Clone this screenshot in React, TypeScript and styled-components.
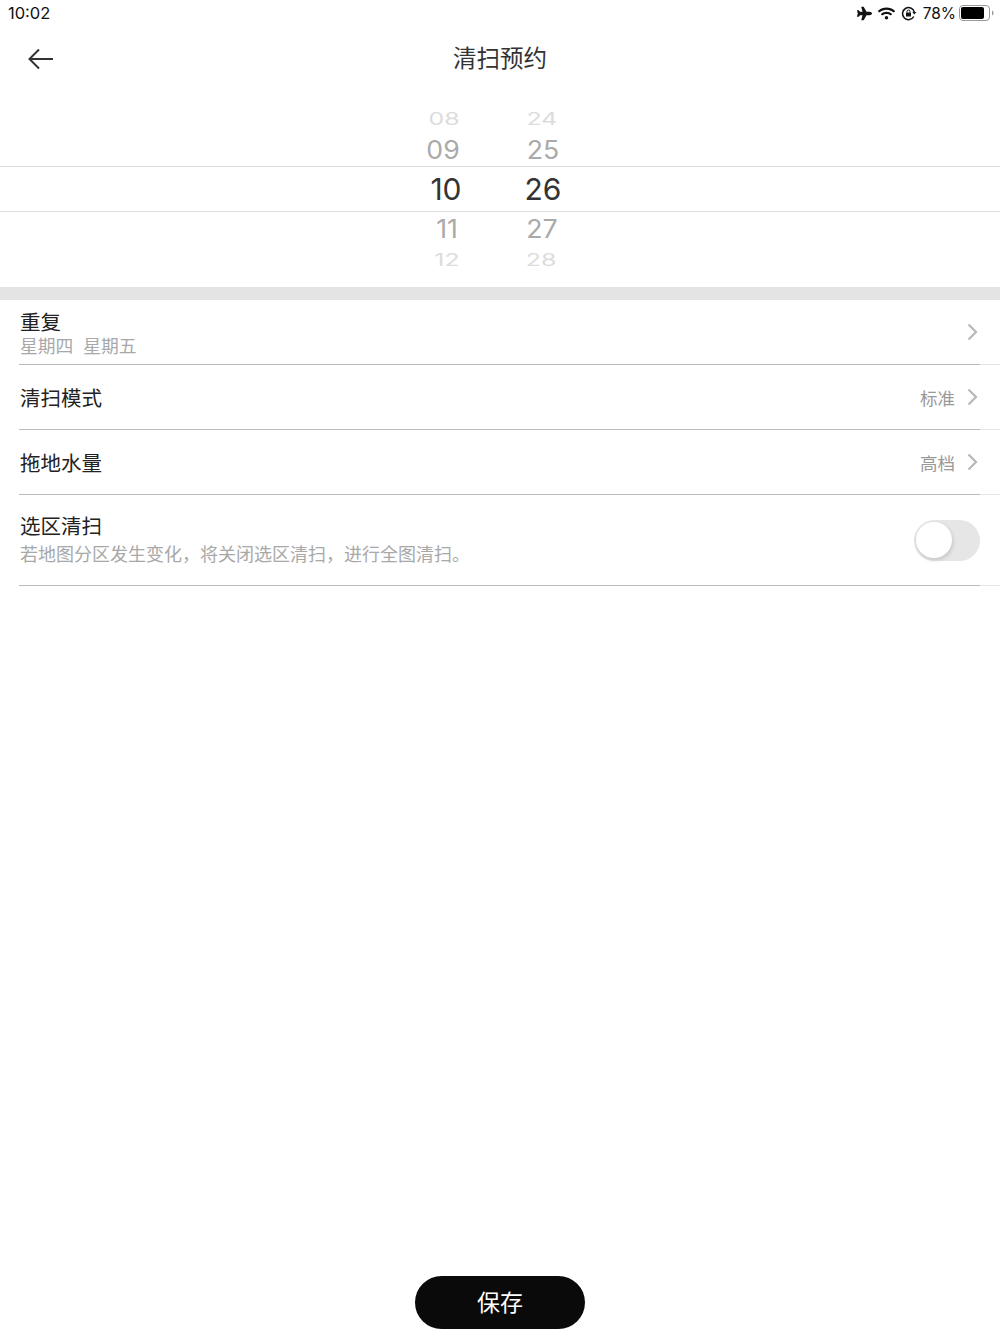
import styled, { createGlobalStyle } from 'styled-components';
import { FaPlane, FaWifi } from 'react-icons/fa';

const GlobalStyle = createGlobalStyle`
  * {
    box-sizing: border-box;
  }

  html,
  body {
    margin: 0;
    padding: 0;
    background: #fff;
    font-family: 'Noto Sans CJK SC', 'Noto Sans', sans-serif;
  }
`;

const Page = styled.div`
  display: flex;
  flex-direction: column;
  min-height: 1334px;
  background: #fff;
`;

const StatusBar = styled.div`
  display: flex;
  align-items: center;
  justify-content: space-between;
  height: 26px;
  padding: 0 6px 0 8px;
  font-family: Inter, 'Liberation Sans', sans-serif;
  color: #111;
`;

const Clock = styled.span`
  font-size: 16.5px;
`;

const StatusIcons = styled.div`
  display: flex;
  align-items: center;
  gap: 6px;
  font-size: 15.5px;
`;

const BatteryLevel = styled.span`
  margin-right: -3px;
`;

const NavBar = styled.div`
  position: relative;
  display: flex;
  align-items: center;
  justify-content: center;
  height: 64px;
  padding-bottom: 2px;
`;

const BackButton = styled.div`
  position: absolute;
  left: 28px;
  top: 22px;
  display: flex;
`;

const Title = styled.div`
  font-size: 23.5px;
  color: #333;
`;

const Picker = styled.div`
  display: flex;
  flex-direction: column;
  height: 197px;
  padding-top: 14px;
`;

const PickerRow = styled.div<{ $h: number; $selected?: boolean }>`
  display: flex;
  justify-content: center;
  align-items: center;
  flex: none;
  height: ${(p) => p.$h}px;
  padding-right: 12px;
  ${(p) => p.$selected && 'border-top: 1px solid #ddd; border-bottom: 1px solid #ddd;'}
`;

const PickerCell = styled.div<{ $level: 0 | 1 | 2; $shift?: number }>`
  width: 98px;
  text-align: center;
  font-family: Inter, 'Liberation Sans', sans-serif;
  font-size: 30px;
  line-height: 1;
  color: ${(p) => ['#333', '#aaa', '#dcdcdc'][p.$level]};
  transform: translateX(${(p) => p.$shift ?? 0}px)
    scale(${(p) => [1, 0.89, 0.83][p.$level]}, ${(p) => [1, 0.84, 0.56][p.$level]});
`;

const Band = styled.div`
  height: 13px;
  background: #e4e4e4;
`;

const Row = styled.div<{ $h: number }>`
  display: flex;
  align-items: center;
  justify-content: space-between;
  height: ${(p) => p.$h}px;
  padding: 0 20px;
`;

const RowText = styled.div<{ $spread?: boolean }>`
  display: flex;
  flex-direction: column;
  ${(p) => p.$spread && 'gap: 4px; padding-bottom: 4px;'}
`;

const RowLabel = styled.div`
  font-size: 20.5px;
  line-height: 26px;
  color: #222;
`;

const RowHint = styled.div<{ $size: number }>`
  font-size: ${(p) => p.$size}px;
  line-height: 23px;
  word-spacing: 1px;
  color: #a8a8a8;
  white-space: pre;
`;

const RowRight = styled.div`
  display: flex;
  align-items: center;
  gap: 12px;
  margin-right: 2px;
`;

const RowValue = styled.div`
  font-size: 17.5px;
  color: #999;
`;

const Rule = styled.div`
  height: 1px;
  margin-left: 19px;
  background: linear-gradient(to right, #bbb 961px, #e4e4e4 961px);
`;

const Toggle = styled.div`
  display: flex;
  align-items: center;
  width: 66px;
  height: 41px;
  padding-left: 2px;
  border-radius: 21px;
  background: #e6e6e6;
`;

const Knob = styled.div`
  width: 36px;
  height: 36px;
  border-radius: 50%;
  background: #fff;
  box-shadow: 1px 2px 4px rgba(0, 0, 0, 0.15);
`;

const Footer = styled.div`
  display: flex;
  justify-content: center;
  margin-top: auto;
  padding-bottom: 5px;
`;

const SaveButton = styled.div`
  display: flex;
  align-items: center;
  justify-content: center;
  width: 170px;
  height: 53px;
  padding-bottom: 4px;
  border-radius: 27px;
  background: #0a0a0a;
  font-size: 23px;
  color: #fff;
`;

const Chevron = () => (
  <svg width="11" height="18" viewBox="0 0 11 18" fill="none" stroke="#b8b8b8" strokeWidth="2.2">
    <path d="M1.500 1.500 9 9l-7.500 7.500" />
  </svg>
);

const RotationLock = () => (
  <svg width="16" height="15" viewBox="0 0 16 15" fill="none">
    <path d="M13.300 6A6 6 0 1 0 12.800 10.500" stroke="#111" strokeWidth="1.500" />
    <path d="M11.300 6h4l-2 2.500z" fill="#111" />
    <rect x="5" y="6.500" width="5" height="4" rx="0.500" fill="#111" />
    <path d="M6 6.500V5.500a1.500 1.500 0 0 1 3 0v1" stroke="#111" />
  </svg>
);

const Battery = () => (
  <svg width="35" height="16" viewBox="0 0 35 16">
    <rect x="0.500" y="0.500" width="30" height="15" rx="3.500" fill="none" stroke="#999" />
    <rect x="2" y="2" width="23" height="12" rx="2" fill="#000" />
    <path d="M33 5.500c1 .4 1.500 1.300 1.500 2.500s-.5 2.100-1.500 2.500z" fill="#999" />
  </svg>
);

export default function App() {
  return (
    <Page>
      <GlobalStyle />
      <StatusBar>
        <Clock>10:02</Clock>
        <StatusIcons>
          <FaPlane size={15} color="#111" />
          <FaWifi size={17} color="#111" />
          <RotationLock />
          <BatteryLevel>78%</BatteryLevel>
          <Battery />
        </StatusIcons>
      </StatusBar>
      <NavBar>
        <BackButton>
          <svg width="26" height="22" viewBox="0 0 26 22" fill="none" stroke="#333" strokeWidth="2">
            <path d="M25 11H2M11 1.500 1.500 11l9.500 9.500" />
          </svg>
        </BackButton>
        <Title>清扫预约</Title>
      </NavBar>
      <Picker>
        <PickerRow $h={29}>
          <PickerCell $level={2} $shift={-1}>08</PickerCell>
          <PickerCell $level={2} $shift={-1}>24</PickerCell>
        </PickerRow>
        <PickerRow $h={33}>
          <PickerCell $level={1} $shift={-2}>09</PickerCell>
          <PickerCell $level={1}>25</PickerCell>
        </PickerRow>
        <PickerRow $h={46} $selected>
          <PickerCell $level={0} $shift={1}>10</PickerCell>
          <PickerCell $level={0}>26</PickerCell>
        </PickerRow>
        <PickerRow $h={34}>
          <PickerCell $level={1} $shift={2}>11</PickerCell>
          <PickerCell $level={1} $shift={-1}>27</PickerCell>
        </PickerRow>
        <PickerRow $h={28}>
          <PickerCell $level={2} $shift={2}>12</PickerCell>
          <PickerCell $level={2} $shift={-2}>28</PickerCell>
        </PickerRow>
      </Picker>
      <Band />
      <Row $h={64}>
        <RowText>
          <RowLabel>重复</RowLabel>
          <RowHint $size={17.8}>星期四  星期五</RowHint>
        </RowText>
        <RowRight>
          <Chevron />
        </RowRight>
      </Row>
      <Rule />
      <Row $h={64}>
        <RowLabel>清扫模式</RowLabel>
        <RowRight>
          <RowValue>标准</RowValue>
          <Chevron />
        </RowRight>
      </Row>
      <Rule />
      <Row $h={64}>
        <RowLabel>拖地水量</RowLabel>
        <RowRight>
          <RowValue>高档</RowValue>
          <Chevron />
        </RowRight>
      </Row>
      <Rule />
      <Row $h={90}>
        <RowText $spread>
          <RowLabel>选区清扫</RowLabel>
          <RowHint $size={18}>若地图分区发生变化，将关闭选区清扫，进行全图清扫。</RowHint>
        </RowText>
        <Toggle>
          <Knob />
        </Toggle>
      </Row>
      <Rule />
      <Footer>
        <SaveButton>保存</SaveButton>
      </Footer>
    </Page>
  );
}
